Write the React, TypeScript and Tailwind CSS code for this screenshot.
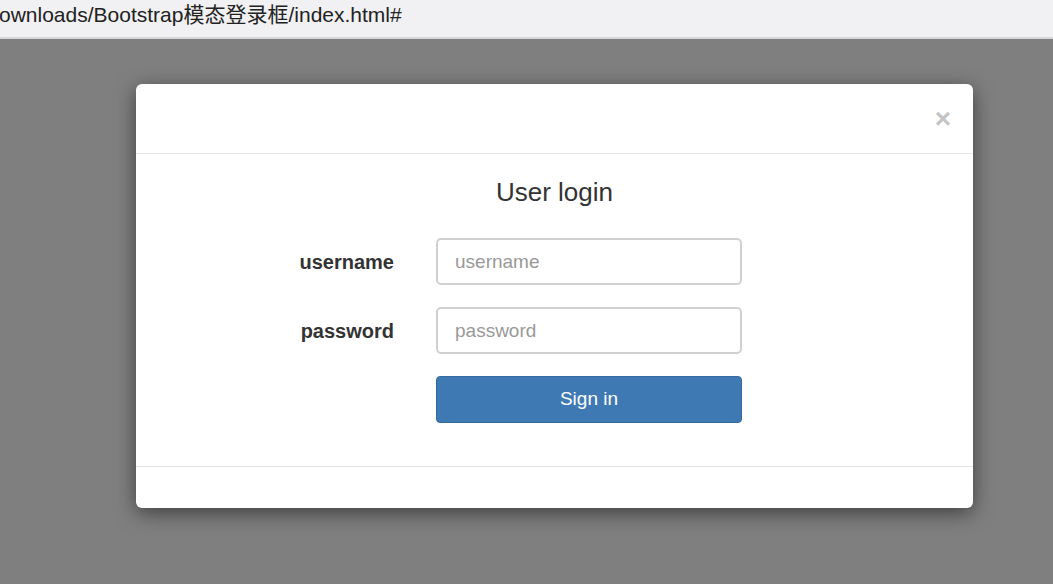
export default function App() {
  return (
    <div
      className="w-[1053px] h-[584px] overflow-hidden bg-[#7f7f7f] flex flex-col"
      style={{ fontFamily: '"Liberation Sans", Arial, "Noto Sans CJK SC", sans-serif' }}
    >
      <div className="h-[39px] shrink-0 bg-[#f1f1f3] border-b-2 border-[#d6d6d8] flex items-start">
        <span className="text-[21px] leading-[30px] text-[#222] -ml-px whitespace-nowrap">
          ownloads/Bootstrap模态登录框/index.html#
        </span>
      </div>

      <div className="pt-[45px] pl-[136px]">
        <div className="w-[837px] bg-white rounded-[6px] shadow-[0_5px_20px_rgba(0,0,0,0.5)]">
          <div className="h-[70px] border-b border-[#e5e5e5] flex items-center justify-end pr-[22px]">
            <span className="text-[28px] font-bold text-[#c4c4c4] leading-none">×</span>
          </div>

          <div className="h-[312px] pt-[22px] flex flex-col items-center">
            <h4 className="text-[26px] font-medium text-[#333] leading-[32px]">User login</h4>

            <div className="mt-[30px] flex flex-col gap-[22px] w-full">
              <Row label="username" placeholder="username" type="text" />
              <Row label="password" placeholder="password" type="password" />
              <div className="flex pl-[300px]">
                <button className="w-[306px] h-[47px] rounded-[4px] bg-[#3f79b4] border border-[#356a9e] text-white text-[19px]">
                  Sign in
                </button>
              </div>
            </div>
          </div>

          <div className="h-[42px] border-t border-[#e5e5e5]" />
        </div>
      </div>
    </div>
  );
}

function Row({ label, placeholder, type }: any) {
  return (
    <div className="flex items-center">
      <label className="w-[258px] text-right text-[20px] font-bold text-[#333]">{label}</label>
      <input
        type={type}
        placeholder={placeholder}
        className="ml-[42px] w-[306px] h-[47px] rounded-[5px] border-2 border-[#d0d0d0] px-[17px] text-[19px] text-[#555] placeholder:text-[#999] outline-none"
      />
    </div>
  );
}
